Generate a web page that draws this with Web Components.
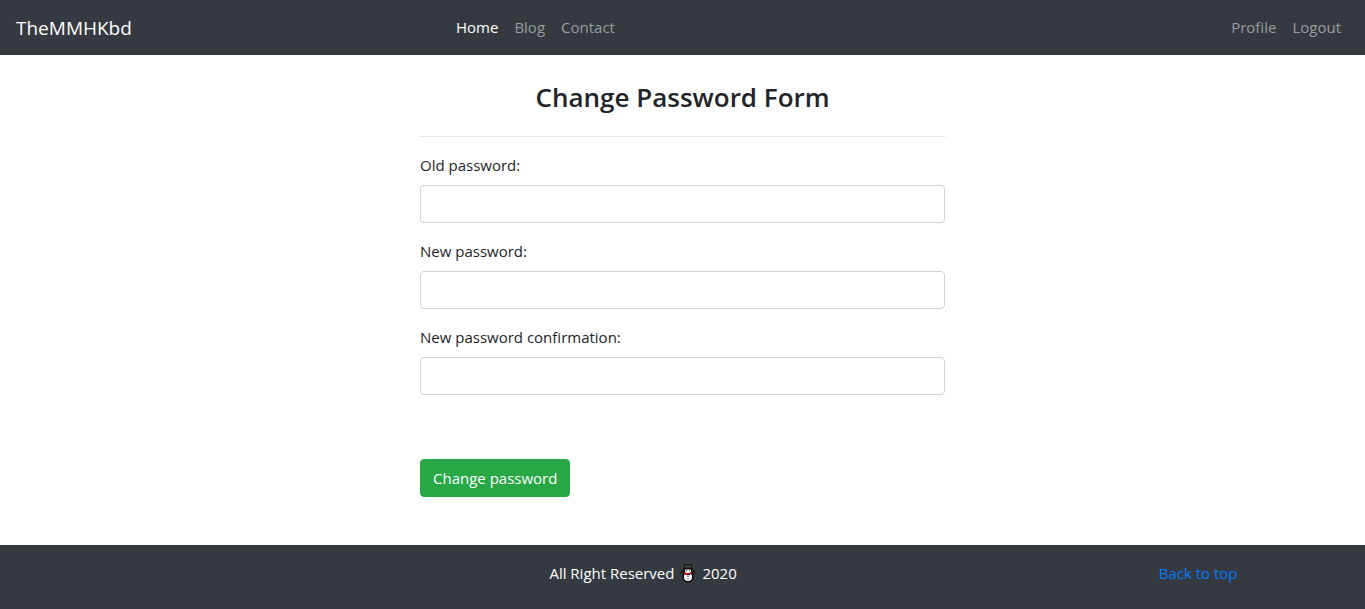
<!DOCTYPE html>
<html lang="en">
<head>
<meta charset="utf-8">
<meta name="viewport" content="width=device-width, initial-scale=1">
<title>Change Password Form</title>
<style>
  body {
    margin: 0;
    min-height: 100vh;
    display: flex;
    flex-direction: column;
    background: #fff;
    color: #212529;
    font: 400 15px/24px "Segoe UI", "Open Sans", "Noto Sans", sans-serif;
  }
</style>
</head>
<body id="top">
<site-header>
  <nav-link slot="main" href="#home" active>Home</nav-link>
  <nav-link slot="main" href="#blog">Blog</nav-link>
  <nav-link slot="main" href="#contact">Contact</nav-link>
  <nav-link slot="account" href="#profile">Profile</nav-link>
  <nav-link slot="account" href="#logout">Logout</nav-link>
</site-header>
<password-form heading="Change Password Form">
  <password-field label="Old password:" autocomplete="current-password"></password-field>
  <password-field label="New password:" autocomplete="new-password"></password-field>
  <password-field label="New password confirmation:" autocomplete="new-password"></password-field>
</password-form>
<site-footer></site-footer>

<script>
class SiteHeader extends HTMLElement {
  constructor() {
    super();
    this.attachShadow({ mode: 'open' }).innerHTML = `
      <style>
        :host { display: block; background: #343a40; }
        nav { display: flex; align-items: center; padding: 8px 16px; min-height: 39px; }
        .brand { margin-right: 16px; color: #fff; font-size: 19px; line-height: 30px; text-decoration: none; }
        .group { display: flex; }
        .near { flex: 1; }
        .far { flex: 2; }
      </style>
      <nav aria-label="Main">
        <a class="brand" href="#top">TheMMHKbd</a>
        <span class="near"></span>
        <div class="group"><slot name="main"></slot></div>
        <span class="far"></span>
        <div class="group"><slot name="account"></slot></div>
      </nav>`;
  }
}
customElements.define('site-header', SiteHeader);

class NavLink extends HTMLElement {
  constructor() {
    super();
    this.attachShadow({ mode: 'open' }).innerHTML = `
      <style>
        :host { display: block; --link: #999c9f; }
        :host([active]) { --link: #fff; }
        a { display: block; padding: 0 8px 2px; color: var(--link); text-decoration: none; }
        a:hover { color: #fff; }
      </style>
      <a><slot></slot></a>`;
  }
  connectedCallback() {
    this.shadowRoot.querySelector('a').setAttribute('href', this.getAttribute('href'));
  }
}
customElements.define('nav-link', NavLink);

class PasswordField extends HTMLElement {
  constructor() {
    super();
    this.attachShadow({ mode: 'open' }).innerHTML = `
      <style>
        :host { display: block; margin-bottom: 16px; }
        label { display: block; margin-bottom: 8px; }
        input {
          display: block; box-sizing: border-box; width: 100%; height: 38px;
          padding: 6px 12px; border: 1px solid #ced4da; border-radius: 4px;
          background: #fff; color: #495057; font: inherit;
        }
        input:focus { outline: 3px solid #bfdeff; border-color: #80bdff; }
      </style>
      <label for="field"></label>
      <input id="field" type="password" required>`;
  }
  connectedCallback() {
    this.shadowRoot.querySelector('label').textContent = this.getAttribute('label');
    this.shadowRoot.querySelector('input').autocomplete = this.getAttribute('autocomplete');
  }
}
customElements.define('password-field', PasswordField);

class PasswordForm extends HTMLElement {
  constructor() {
    super();
    this.attachShadow({ mode: 'open' }).innerHTML = `
      <style>
        :host { display: block; flex: 1; padding: 24px 16px 48px; }
        main { max-width: 525px; margin: 0 auto; }
        h1 { margin: 0; font-size: 26px; line-height: 36px; font-weight: 600; text-align: center; }
        hr { margin: 21px 0 16px; border: 0; border-top: 1px solid #e5e5e5; }
        button {
          display: block; margin-top: 64px; height: 38px; padding: 6px 12px;
          border: 1px solid #28a745; border-radius: 4px; background: #28a745;
          color: #fff; font: inherit; cursor: pointer;
        }
        button:hover { background: #218838; }
      </style>
      <main>
        <h1></h1>
        <hr>
        <form>
          <slot></slot>
          <button type="submit">Change password</button>
        </form>
      </main>`;
  }
  connectedCallback() {
    this.shadowRoot.querySelector('h1').textContent = this.getAttribute('heading');
  }
}
customElements.define('password-form', PasswordForm);

class SnowmanIcon extends HTMLElement {
  constructor() {
    super();
    this.attachShadow({ mode: 'open' }).innerHTML = `
      <style>
        :host { display: inline-block; vertical-align: middle; }
        svg { display: block; }
      </style>
      <svg width="18" height="20" viewBox="0 0 18 20" role="img" aria-label="Snowman">
        <path d="M2 8.500l4 2M16 8.500l-4 2" stroke="#000" stroke-width="2.600"/>
        <path d="M2 8.500l4 2M16 8.500l-4 2" stroke="#6b3410" stroke-width="1"/>
        <circle cx="9" cy="14" r="4.800" fill="#fff" stroke="#000" stroke-width="1.400"/>
        <circle cx="9" cy="8" r="3.600" fill="#fff" stroke="#000" stroke-width="1.200"/>
        <path d="M5 1h8v4h1v1.500H4V5h1z" fill="#111"/>
        <path d="M6 2h6v3H6z" fill="#3a3a3a"/>
        <path d="M7 7.300h1v1H7zM10 7.300h1v1h-1zM8.500 13h1v1h-1zM8.500 15.500h1v1h-1z" fill="#222"/>
        <path d="M5.500 9q3.500 2 7 0v1.600q-2.500 1-4.500 .6L7 12.500 5.500 11z" fill="#e8202c"/>
      </svg>`;
  }
}
customElements.define('snowman-icon', SnowmanIcon);

class SiteFooter extends HTMLElement {
  constructor() {
    super();
    this.attachShadow({ mode: 'open' }).innerHTML = `
      <style>
        :host { display: block; background: #343a40; color: #fff; }
        footer { display: flex; max-width: 1110px; margin: 0 auto; padding: 16px 0 24px; }
        p { flex: 1; display: flex; align-items: center; justify-content: center; gap: 5px; margin: 0; }
        a { color: #007bff; text-decoration: none; }
        a:hover { text-decoration: underline; }
      </style>
      <footer>
        <p><span>All Right Reserved</span><snowman-icon></snowman-icon><span>2020</span></p>
        <a href="#top">Back to top</a>
      </footer>`;
  }
}
customElements.define('site-footer', SiteFooter);
</script>
</body>
</html>
